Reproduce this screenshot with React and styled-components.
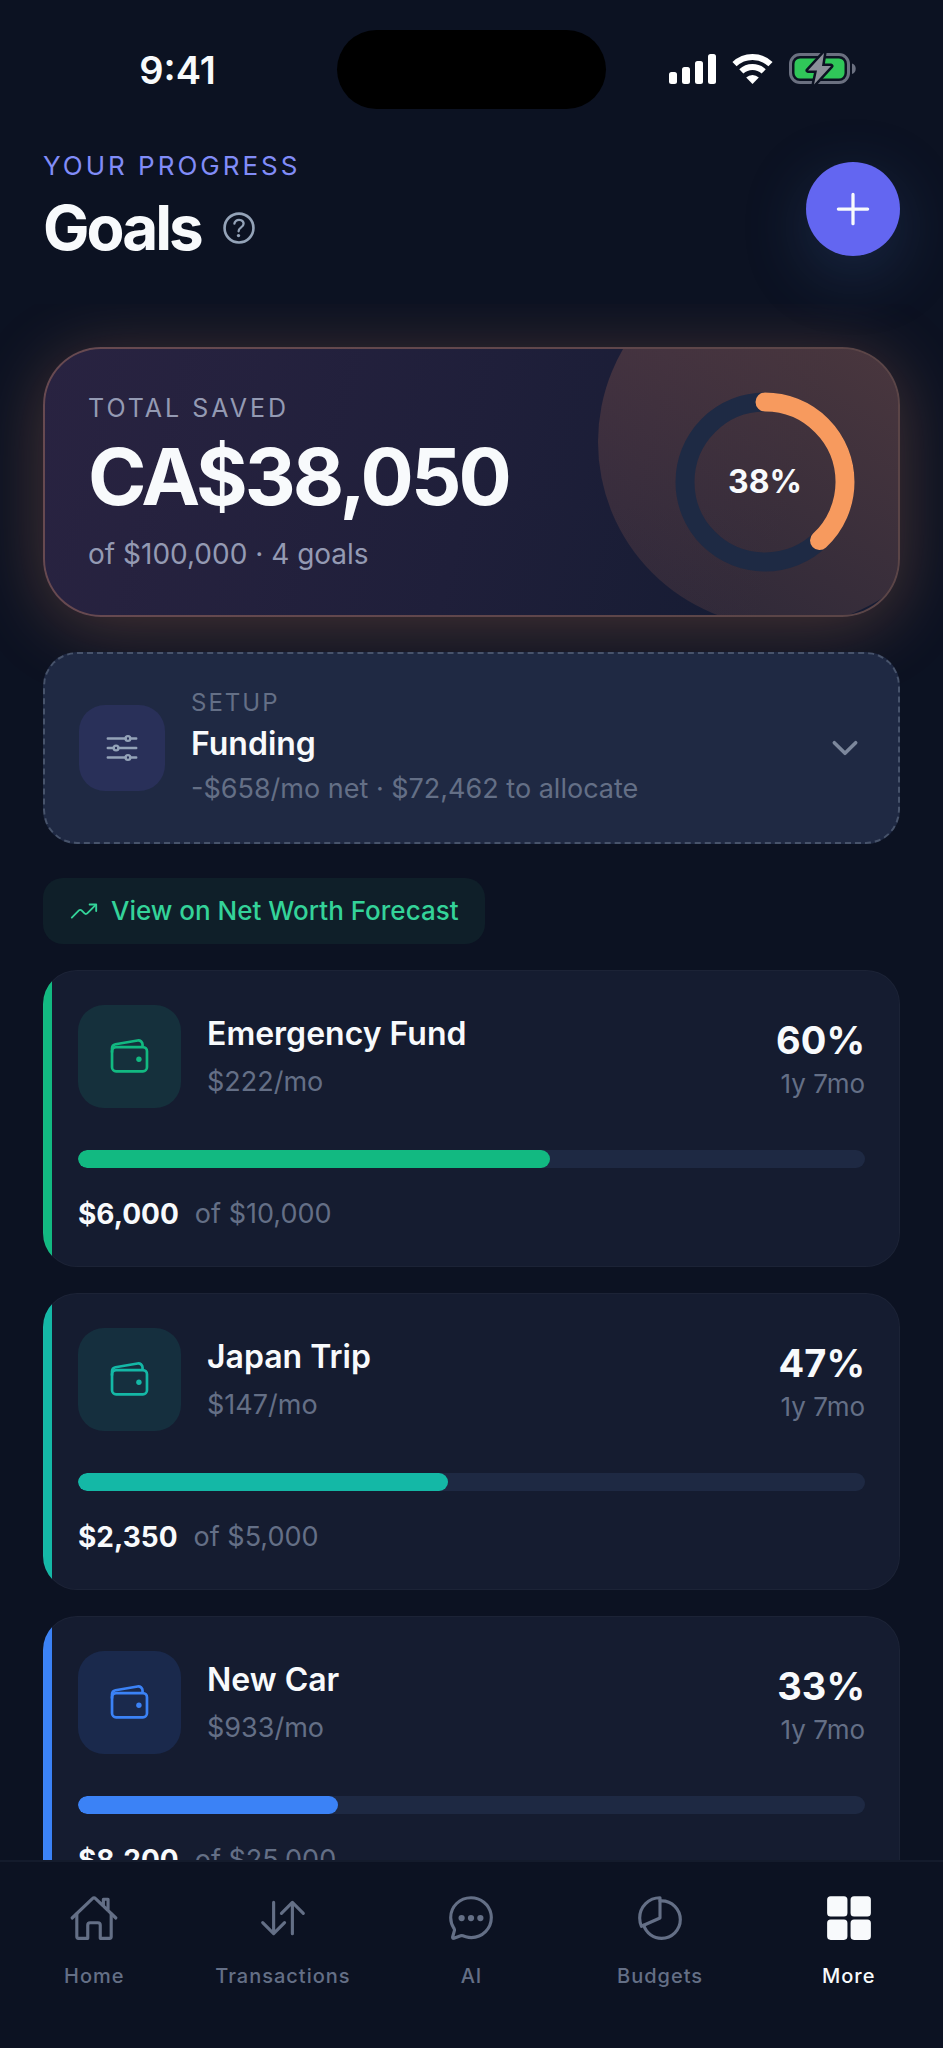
import React from "react";
import styled, { createGlobalStyle } from "styled-components";
import {
  IoAdd,
  IoChatbubbleEllipsesOutline,
  IoChevronDown,
  IoGrid,
  IoHelpCircleOutline,
  IoHomeOutline,
  IoOptionsOutline,
  IoPieChartOutline,
  IoSwapVerticalOutline,
  IoTrendingUpOutline,
  IoWalletOutline,
} from "react-icons/io5";

const goals = [
  {
    name: "Emergency Fund",
    monthly: "$222/mo",
    percent: 60,
    term: "1y 7mo",
    saved: "$6,000",
    target: "$10,000",
    color: "#12b981",
    tint: "#15303c",
  },
  {
    name: "Japan Trip",
    monthly: "$147/mo",
    percent: 47,
    term: "1y 7mo",
    saved: "$2,350",
    target: "$5,000",
    color: "#14b8a6",
    tint: "#152f3e",
  },
  {
    name: "New Car",
    monthly: "$933/mo",
    percent: 33,
    term: "1y 7mo",
    saved: "$8,200",
    target: "$25,000",
    color: "#3b82f6",
    tint: "#1a294c",
  },
];

const tabs = [
  { label: "Home", Icon: IoHomeOutline },
  { label: "Transactions", Icon: IoSwapVerticalOutline },
  { label: "AI", Icon: IoChatbubbleEllipsesOutline },
  { label: "Budgets", Icon: IoPieChartOutline },
  { label: "More", Icon: IoGrid, active: true },
];

const StatusIcons = () => (
  <svg width="188" height="34" viewBox="0 0 188 34" aria-hidden="true">
    <g fill="#fff">
      <rect x="0" y="19" width="8" height="12" rx="2.5" />
      <rect x="13" y="14" width="8" height="17" rx="2.5" />
      <rect x="26" y="8" width="8" height="23" rx="2.5" />
      <rect x="39" y="1" width="8" height="30" rx="2.5" />
    </g>
    <g fill="none" stroke="#fff" strokeWidth="6">
      <path d="M65.5 11.2a26 26 0 0 1 36 0" />
      <path d="M72.3 18.4a16.5 16.5 0 0 1 22.4 0" />
    </g>
    <path fill="#fff" d="M83.5 31l-6.3-6.5a9 9 0 0 1 12.6 0z" />
    <rect
      x="121.5"
      y="1.5"
      width="58"
      height="28"
      rx="9.5"
      fill="none"
      stroke="#6b7080"
      strokeWidth="3"
    />
    <rect x="125.5" y="5.5" width="50" height="20" rx="5.5" fill="#30c759" />
    <path fill="#6b7080" d="M183 10.5c5 1.5 5 9 0 10.5z" />
    <path
      d="M155 0L139 17.5h9L145 31.5 162 13h-9z"
      fill="#8b8f99"
      stroke="#0c1222"
      strokeWidth="5"
      strokeLinejoin="round"
      paintOrder="stroke"
    />
  </svg>
);

const Ring = ({ percent }) => {
  const radius = 80;
  const length = 2 * Math.PI * radius;
  return (
    <RingWrapper>
      <svg width="180" height="180" viewBox="0 0 180 180" aria-hidden="true">
        <g fill="none" strokeWidth="19" transform="rotate(-90 90 90)">
          <circle cx="90" cy="90" r={radius} stroke="#1e2a44" />
          <circle
            cx="90"
            cy="90"
            r={radius}
            stroke="#f79a5e"
            strokeLinecap="round"
            strokeDasharray={`${(length * percent) / 100} ${length}`}
          />
        </g>
      </svg>
      <strong>{percent}%</strong>
    </RingWrapper>
  );
};

const Goal = ({ goal }) => (
  <GoalCard $color={goal.color}>
    <GoalTop>
      <IconBox $size={103} $bg={goal.tint} $color={goal.color}>
        <IoWalletOutline size={43} />
      </IconBox>
      <GoalText>
        <ItemTitle>{goal.name}</ItemTitle>
        <Muted>{goal.monthly}</Muted>
      </GoalText>
      <GoalStats>
        <strong>{goal.percent}%</strong>
        <span>{goal.term}</span>
      </GoalStats>
    </GoalTop>
    <Track
      role="progressbar"
      aria-label={goal.name}
      aria-valuenow={goal.percent}
      aria-valuemin={0}
      aria-valuemax={100}
    >
      <Fill $color={goal.color} style={{ width: `${goal.percent}%` }} />
    </Track>
    <Amounts>
      <strong>{goal.saved}</strong>
      <Muted>of {goal.target}</Muted>
    </Amounts>
  </GoalCard>
);

const App = () => {
  return (
    <Screen>
      <GlobalStyle />
      <StatusBar>
        <Time>9:41</Time>
        <Island />
        <StatusRight>
          <StatusIcons />
        </StatusRight>
      </StatusBar>

      <Header>
        <div>
          <Eyebrow>YOUR PROGRESS</Eyebrow>
          <TitleRow>
            <h1>Goals</h1>
            <HelpButton type="button" aria-label="About goals">
              <IoHelpCircleOutline size={42} />
            </HelpButton>
          </TitleRow>
        </div>
        <AddButton type="button" aria-label="Add goal">
          <IoAdd size={52} />
        </AddButton>
      </Header>

      <Content>
        <Hero>
          <HeroText>
            <HeroLabel>TOTAL SAVED</HeroLabel>
            <HeroAmount>CA$38,050</HeroAmount>
            <HeroNote>of $100,000 · 4 goals</HeroNote>
          </HeroText>
          <Ring percent={38} />
        </Hero>

        <Funding type="button" aria-expanded="false">
          <IconBox $size={86} $bg="#293059" $color="#94a3b8">
            <IoOptionsOutline size={38} />
          </IconBox>
          <FundingText>
            <SetupLabel>SETUP</SetupLabel>
            <ItemTitle as="span">Funding</ItemTitle>
            <Muted>-$658/mo net · $72,462 to allocate</Muted>
          </FundingText>
          <IoChevronDown size={38} />
        </Funding>

        <ForecastLink href="#forecast">
          <IoTrendingUpOutline size={30} />
          View on Net Worth Forecast
        </ForecastLink>

        <GoalList>
          {goals.map((goal) => (
            <Goal key={goal.name} goal={goal} />
          ))}
        </GoalList>
      </Content>

      <TabBar>
        {tabs.map(({ label, Icon, active }) => (
          <Tab
            key={label}
            href={`#${label.toLowerCase()}`}
            $active={active}
            aria-current={active ? "page" : undefined}
          >
            <Icon size={50} />
            {label}
          </Tab>
        ))}
      </TabBar>
    </Screen>
  );
};

const GlobalStyle = createGlobalStyle`
  * {
    box-sizing: border-box;
  }
  body {
    margin: 0;
    background: #0c1222;
    color: #f8fafc;
    font-family: Inter, "Liberation Sans", sans-serif;
    font-size: 28px;
    line-height: 36px;
  }
  h1, h2, p, ul {
    margin: 0;
    padding: 0;
  }
  button {
    border: 0;
    padding: 0;
    font: inherit;
    color: inherit;
    cursor: pointer;
  }
  svg {
    display: block;
    flex-shrink: 0;
  }
`;

const Screen = styled.div`
  height: 100vh;
  display: flex;
  flex-direction: column;
  background: #0c1222;
`;

const StatusBar = styled.div`
  display: grid;
  grid-template-columns: 1fr 269px 1fr;
  align-items: center;
  height: 139px;
  flex-shrink: 0;
`;

const Time = styled.div`
  justify-self: center;
  padding-left: 18px;
  font-size: 38px;
  line-height: 44px;
  font-weight: 600;
`;

const Island = styled.div`
  height: 79px;
  border-radius: 40px;
  background: #000;
`;

const StatusRight = styled.div`
  justify-self: center;
  padding-right: 24px;
`;

const Header = styled.header`
  display: flex;
  justify-content: space-between;
  align-items: center;
  padding: 11px 43px 36px;
  flex-shrink: 0;
`;

const Eyebrow = styled.p`
  font-size: 26px;
  line-height: 32px;
  letter-spacing: 3px;
  color: #818cf8;
`;

const TitleRow = styled.div`
  display: flex;
  align-items: center;
  gap: 17px;
  margin-top: 6px;
  h1 {
    font-size: 62px;
    line-height: 80px;
    font-weight: 700;
    letter-spacing: -3px;
  }
`;

const HelpButton = styled.button`
  background: none;
  color: #94a3b8;
`;

const AddButton = styled.button`
  display: grid;
  place-items: center;
  width: 94px;
  height: 94px;
  border-radius: 50%;
  background: #6366f1;
  box-shadow: 0 18px 64px rgba(60, 100, 160, 0.28);
`;

const Content = styled.main`
  flex: 1;
  min-height: 0;
  padding: 43px 43px 26px;
  overflow-y: auto;
  scrollbar-width: none;
`;

const Hero = styled.section`
  position: relative;
  display: flex;
  justify-content: space-between;
  align-items: center;
  padding: 43px;
  border: 2px solid rgba(251, 166, 120, 0.3);
  border-radius: 58px;
  overflow: hidden;
  background: linear-gradient(105deg, #292341 0%, #1f1f3a 50%, #161c33 85%)
    border-box;
  box-shadow: 0 10px 70px rgba(251, 156, 110, 0.26);
  &::before {
    content: "";
    position: absolute;
    top: -92px;
    right: -70px;
    width: 370px;
    height: 370px;
    border-radius: 50%;
    background: linear-gradient(
      210deg,
      rgba(251, 146, 100, 0.24) 15%,
      rgba(251, 146, 100, 0.09)
    );
  }
`;

const HeroText = styled.div`
  display: flex;
  flex-direction: column;
`;

const HeroLabel = styled.h2`
  font-size: 25px;
  line-height: 32px;
  font-weight: 400;
  letter-spacing: 3px;
  color: #949ab3;
`;

const HeroAmount = styled.p`
  margin: 8px 0 16px;
  font-size: 79px;
  line-height: 88px;
  font-weight: 700;
  letter-spacing: -3px;
`;

const HeroNote = styled.p`
  color: #949ab3;
`;

const RingWrapper = styled.div`
  position: relative;
  display: grid;
  place-items: center;
  > * {
    grid-area: 1 / 1;
  }
  strong {
    font-size: 32px;
    font-weight: 700;
  }
`;

// relative so the hero's glow stays behind this card
const Funding = styled.button`
  position: relative;
  display: flex;
  align-items: center;
  gap: 26px;
  width: 100%;
  margin-top: 35px;
  padding: 35px 34px;
  border: 2px dashed #47536b;
  border-radius: 34px;
  background: #1f2943;
  text-align: left;
  > svg {
    color: #7c879c;
  }
`;

const FundingText = styled.span`
  display: flex;
  flex-direction: column;
  gap: 7px;
  flex: 1;
`;

const SetupLabel = styled.span`
  font-size: 24px;
  line-height: 28px;
  letter-spacing: 2px;
  color: #646f86;
`;

const ItemTitle = styled.h2`
  font-size: 32px;
  line-height: 40px;
  font-weight: 600;
  color: #f8fafc;
`;

const Muted = styled.span`
  font-size: 27px;
  color: #646f86;
`;

const IconBox = styled.span`
  display: grid;
  place-items: center;
  flex-shrink: 0;
  width: ${(props) => props.$size}px;
  height: ${(props) => props.$size}px;
  border-radius: 26px;
  background: ${(props) => props.$bg};
  color: ${(props) => props.$color};
`;

const ForecastLink = styled.a`
  display: flex;
  align-items: center;
  gap: 12px;
  width: fit-content;
  margin: 34px 0 26px;
  padding: 17px 26px;
  border-radius: 20px;
  background: #0f1f29;
  color: #34d399;
  font-size: 26px;
  line-height: 32px;
  font-weight: 500;
  text-decoration: none;
`;

const GoalList = styled.ul`
  display: flex;
  flex-direction: column;
  gap: 26px;
  list-style: none;
`;

const GoalCard = styled.li`
  padding: 35px;
  border-radius: 34px;
  background: linear-gradient(
    to right,
    ${(props) => props.$color} 9px,
    #151c30 9px
  );
  box-shadow: inset 0 0 0 1px rgba(255, 255, 255, 0.03);
`;

const GoalTop = styled.div`
  display: flex;
  align-items: center;
  gap: 26px;
`;

const GoalText = styled.div`
  display: flex;
  flex-direction: column;
  gap: 10px;
  flex: 1;
`;

const GoalStats = styled.div`
  display: flex;
  flex-direction: column;
  gap: 4px;
  padding-top: 6px;
  text-align: right;
  strong {
    font-size: 38px;
    line-height: 44px;
    font-weight: 700;
  }
  span {
    font-size: 26px;
    color: #646f86;
  }
`;

const Track = styled.div`
  height: 18px;
  margin: 42px 0 28px;
  border-radius: 9px;
  background: #1e2943;
  overflow: hidden;
`;

const Fill = styled.div`
  height: 100%;
  border-radius: 9px;
  background: ${(props) => props.$color};
`;

const Amounts = styled.p`
  display: flex;
  gap: 16px;
  strong {
    font-weight: 700;
  }
`;

const TabBar = styled.nav`
  display: grid;
  grid-template-columns: repeat(5, 1fr);
  height: 188px;
  padding-top: 31px;
  flex-shrink: 0;
  border-top: 2px solid #141b2c;
  background: #0c1222;
`;

const Tab = styled.a`
  display: flex;
  flex-direction: column;
  align-items: center;
  gap: 19px;
  font-size: 20px;
  line-height: 28px;
  font-weight: 500;
  letter-spacing: 1px;
  text-decoration: none;
  color: ${(props) => (props.$active ? "#f8fafc" : "#646f86")};
`;

export default App;
